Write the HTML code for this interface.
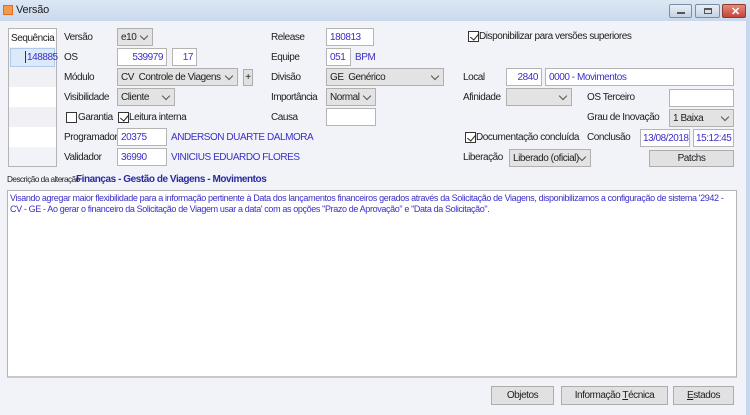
<!DOCTYPE html>
<html><head><meta charset="utf-8">
<style>
*{margin:0;padding:0;box-sizing:border-box}
body{width:750px;height:415px;overflow:hidden;background:#f2f3f8;font-family:"Liberation Sans",sans-serif;font-size:10px;letter-spacing:-0.45px;color:#1e1e1e;position:relative}
.a{position:absolute;white-space:nowrap}
.tb{left:0;top:0;width:750px;height:21px;background:linear-gradient(#dce7f4,#c9d9ec)}
.f{position:absolute;background:#fff;border:1px solid #b4b4b4;color:#3a2fc8;height:18px;line-height:17px;padding:0 3px;white-space:nowrap;overflow:hidden}
.r{text-align:right}
.c{position:absolute;background:#e3e3e3;border:1px solid #b0b0b0;height:18px;line-height:17px;padding:0 3px;color:#1e1e1e;white-space:nowrap}
.c:after{content:"";position:absolute;right:5px;top:4px;width:5px;height:5px;border-right:1px solid #555;border-bottom:1px solid #555;transform:rotate(45deg)}
.b{position:absolute;background:#e1e1e1;border:1px solid #adadad;height:19px;line-height:17px;text-align:center;color:#1e1e1e;white-space:nowrap}
.cb{position:absolute;width:11px;height:11px;border:1px solid #333;background:#fff}
.ck:after{content:"";position:absolute;left:3px;top:0px;width:4px;height:7px;border-right:1px solid #222;border-bottom:1px solid #222;transform:rotate(40deg)}
.blue{color:#3a2fc8}
.wb{position:absolute;top:4px;height:14px;border:1px solid #7a8ea8;border-radius:2px;background:linear-gradient(#e8eef6,#c6d3e3)}
</style></head><body>
<div class="a tb"></div>
<div class="a" style="left:3px;top:5px;width:10px;height:10px;background:#f19a4a;border:1px solid #e36a1e"></div>
<div class="a" style="left:16px;top:4px;font-size:11px;letter-spacing:-0.2px">Versão</div>
<div class="wb" style="left:669px;width:23px"><div class="a" style="left:7px;top:7px;width:8px;height:2px;background:#555"></div></div>
<div class="wb" style="left:695px;width:25px"><div class="a" style="left:8px;top:3px;width:8px;height:6px;border:1px solid #555;border-top-width:2px"></div></div>
<div class="wb" style="left:722px;width:24px;background:linear-gradient(#e88a7a,#c4443a);border-color:#8a3a30"><div class="a" style="left:8px;top:0px;color:#fff;font-weight:bold;font-size:11px">✕</div></div>
<div class="a" style="left:746px;top:21px;width:4px;height:394px;background:#c5d7ee"></div>

<div class="a" style="left:8px;top:28px;width:49px;height:139px;border:1px solid #b4b4b4;background:#f2f3f8"></div>
<div class="a" style="left:9px;top:29px;width:47px;height:18px;background:#fff"></div>
<div class="a" style="left:11px;top:33px">Sequência</div>
<div class="a" style="left:9px;top:67px;width:47px;height:20px;background:#f0f0f5"></div>
<div class="a" style="left:9px;top:87px;width:47px;height:20px;background:#fff"></div>
<div class="a" style="left:9px;top:107px;width:47px;height:20px;background:#f0f0f5"></div>
<div class="a" style="left:9px;top:127px;width:47px;height:20px;background:#fff"></div>
<div class="a" style="left:10px;top:48px;width:45px;height:19px;background:#dbe9f8;border:1px solid #aecbee"></div>
<div class="a" style="left:25px;top:51px;width:1px;height:12px;background:#333"></div>
<div class="a blue" style="left:27px;top:52px">148885</div>

<div class="a" style="left:64px;top:32px">Versão</div>
<div class="a" style="left:64px;top:52px">OS</div>
<div class="a" style="left:64px;top:72px">Módulo</div>
<div class="a" style="left:64px;top:92px">Visibilidade</div>
<div class="a" style="left:64px;top:132px">Programador</div>
<div class="a" style="left:64px;top:152px">Validador</div>
<div class="c" style="left:117px;top:28px;width:36px">e10</div>
<div class="f r" style="left:117px;top:48px;width:50px">539979</div>
<div class="f r" style="left:172px;top:48px;width:25px">17</div>
<div class="c" style="left:117px;top:68px;width:121px">CV&nbsp; Controle de Viagens</div>
<div class="b" style="left:243px;top:69px;width:10px;height:17px;line-height:15px">+</div>
<div class="c" style="left:117px;top:88px;width:58px">Cliente</div>
<div class="cb" style="left:66px;top:112px"></div>
<div class="a" style="left:78px;top:112px">Garantia</div>
<div class="cb ck" style="left:118px;top:112px"></div>
<div class="a" style="left:129px;top:112px">Leitura interna</div>
<div class="f" style="left:117px;top:128px;width:50px">20375</div>
<div class="a blue" style="left:171px;top:132px">ANDERSON DUARTE DALMORA</div>
<div class="f" style="left:117px;top:148px;width:50px">36990</div>
<div class="a blue" style="left:171px;top:152px">VINICIUS EDUARDO FLORES</div>

<div class="a" style="left:271px;top:32px">Release</div>
<div class="a" style="left:271px;top:52px">Equipe</div>
<div class="a" style="left:271px;top:72px">Divisão</div>
<div class="a" style="left:271px;top:92px;letter-spacing:-0.55px">Importância</div>
<div class="a" style="left:271px;top:112px">Causa</div>
<div class="f" style="left:326px;top:28px;width:48px">180813</div>
<div class="f" style="left:326px;top:48px;width:25px">051</div>
<div class="a blue" style="left:355px;top:52px">BPM</div>
<div class="c" style="left:326px;top:68px;width:118px">GE&nbsp; Genérico</div>
<div class="c" style="left:326px;top:88px;width:50px">Normal</div>
<div class="f" style="left:326px;top:108px;width:50px"></div>

<div class="cb ck" style="left:468px;top:31px"></div>
<div class="a" style="left:479px;top:31px">Disponibilizar para versões superiores</div>
<div class="a" style="left:463px;top:72px">Local</div>
<div class="f r" style="left:506px;top:68px;width:36px">2840</div>
<div class="f" style="left:545px;top:68px;width:189px">0000 - Movimentos</div>
<div class="a" style="left:463px;top:92px">Afinidade</div>
<div class="c" style="left:506px;top:88px;width:66px"></div>
<div class="a" style="left:587px;top:92px">OS Terceiro</div>
<div class="f" style="left:669px;top:89px;width:65px"></div>
<div class="a" style="left:587px;top:112px">Grau de Inovação</div>
<div class="c" style="left:669px;top:109px;width:65px">1 Baixa</div>
<div class="cb ck" style="left:465px;top:132px"></div>
<div class="a" style="left:476px;top:132px">Documentação concluída</div>
<div class="a" style="left:587px;top:132px">Conclusão</div>
<div class="f" style="left:640px;top:129px;width:50px;padding:0 2px">13/08/2018</div>
<div class="f" style="left:693px;top:129px;width:41px;padding:0 2px">15:12:45</div>
<div class="a" style="left:463px;top:152px">Liberação</div>
<div class="c" style="left:509px;top:149px;width:82px">Liberado (oficial)</div>
<div class="b" style="left:649px;top:150px;width:85px;height:17px;line-height:15px">Patchs</div>

<div class="a" style="left:7px;top:175px;font-size:8.2px;letter-spacing:-0.5px">Descrição da alteração</div>
<div class="a" style="left:76px;top:174px;font-weight:bold;color:#2a2aa0;font-size:10px">Finanças - Gestão de Viagens - Movimentos</div>
<div class="a" style="left:7px;top:190px;width:730px;height:188px;background:#fff;border:1px solid #b4b4b4;border-bottom:2px solid #c8c8c8;color:#3a2fc8;font-size:9px;line-height:11px;padding:2px 2px;white-space:normal;letter-spacing:-0.37px">Visando agregar maior flexibilidade para a informação pertinente à Data dos lançamentos financeiros gerados através da Solicitação de Viagens, disponibilizamos a configuração de sistema '2942 - CV - GE - Ao gerar o financeiro da Solicitação de Viagem usar a data' com as opções "Prazo de Aprovação" e "Data da Solicitação".</div>

<div class="b" style="left:491px;top:386px;width:63px">Ob<u>j</u>etos</div>
<div class="b" style="left:561px;top:386px;width:107px">Informação <u>T</u>écnica</div>
<div class="b" style="left:673px;top:386px;width:61px"><u>E</u>stados</div>
</body></html>
